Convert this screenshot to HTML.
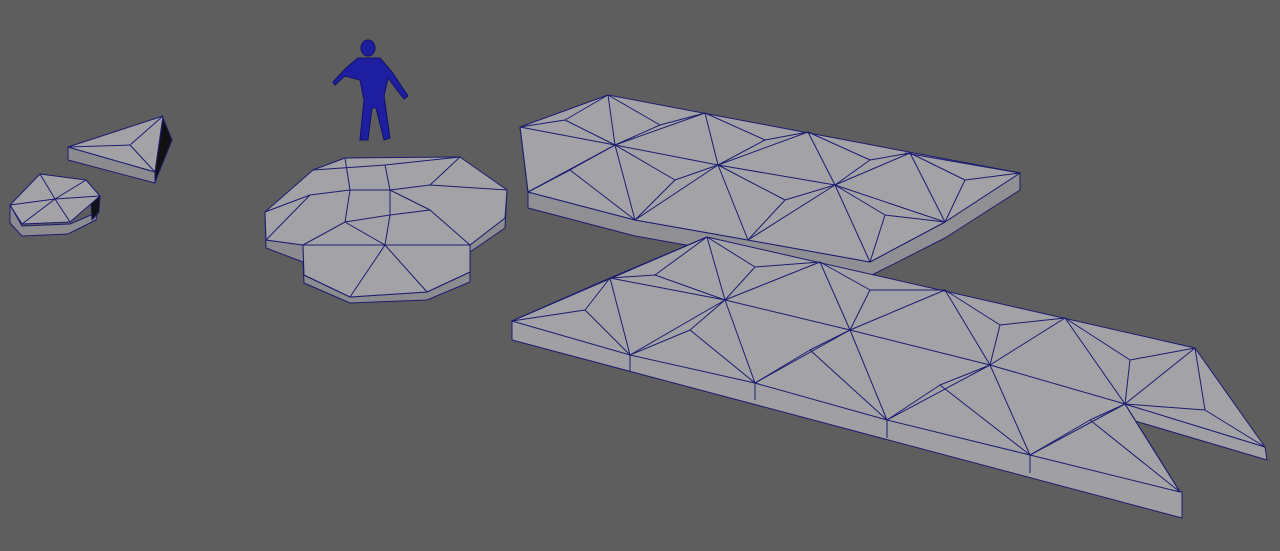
<!DOCTYPE html>
<html><head><meta charset="utf-8"><style>html,body{margin:0;padding:0;background:#5e5e5e;overflow:hidden}svg{display:block}</style></head>
<body>
<svg width="1280" height="551" viewBox="0 0 1280 551" xmlns="http://www.w3.org/2000/svg">
<rect width="1280" height="551" fill="#5e5e5e"/>
<g stroke="#1c1c70" stroke-width="1" stroke-linejoin="round">
<!-- small hex -->
<polygon points="10,205 10,223 22,236 68,234 96,220 100,196 98,212 70,224 22,226" fill="#8c8c90"/>
<polygon points="90,188 100,196 99,212 92,220" fill="#111"/>
<polygon points="10,205 40,174 86,180 100,196 70,222 22,224" fill="#a3a3a7"/>
<path d="M55,199 L40,174 M55,199 L86,180 M55,199 L100,196 M55,199 L70,222 M55,199 L22,224 M55,199 L10,205" fill="none"/>
<!-- triangle -->
<polygon points="68,147 68,160 155,183 168,142 155,172" fill="#8c8c90"/>
<polygon points="163,118 172,140 155,182 155,170" fill="#111"/>
<polygon points="68,147 163,116 155,172" fill="#a3a3a7"/>
<path d="M130,145 L68,147 M130,145 L163,116 M130,145 L155,172" fill="none"/>
<!-- hex cluster -->
<polygon points="265,212 266,248 303,262 304,283 350,303 427,300 470,282 470,252 505,228 507,190 505,218 470,245 470,272 427,292 350,297 304,275 303,245 266,240" fill="#8c8c90"/>
<polygon points="265,212 313,170 345,158 460,157 507,190 505,218 470,245 470,272 427,292 350,297 304,275 303,245 266,240" fill="#a3a3a7"/>
<path d="M313,170 L385,165 L460,157 M345,158 L350,190 L310,195 L265,212 M385,165 L390,190 L350,190 M460,157 L430,185 L390,190 L430,210 L470,245 M430,185 L507,190 M350,190 L345,222 L303,245 M345,222 L390,215 L430,210 M390,215 L385,245 L345,222 M385,245 L427,292 M385,245 L350,297 M385,245 L470,245 M385,245 L303,245 M310,195 L266,240 M390,190 L390,215" fill="none"/>
<!-- top strip -->
<polygon points="528,192 528,208 635,236 748,256 870,276 945,238 1020,190 1020,173 945,222 870,262 748,240 635,220" fill="#909094"/>
<polygon points="520,127 608,95 1020,173 945,222 870,262 748,240 635,220 528,192" fill="#a3a3a7"/>
<path d="M520,127 L615,145 L718,165 L835,185 L945,222 M608,95 L615,145 L705,113 L718,165 L808,132 L835,185 L910,153 L945,222 M615,145 L635,220 L718,165 L748,240 L835,185 L870,262 M528,192 L615,145 M520,127 L528,192 M905,153 L1020,173" fill="none"/>
<path d="M565,120 L608,95 M565,120 L615,145 M565,120 L520,127 M570,170 L528,192 M570,170 L615,145 M570,170 L635,220 M660,125 L705,113 M660,125 L615,145 M660,125 L608,95 M675,180 L635,220 M675,180 L718,165 M675,180 L615,145 M765,140 L808,132 M765,140 L718,165 M765,140 L705,113 M785,200 L748,240 M785,200 L835,185 M785,200 L718,165 M870,160 L910,153 M870,160 L835,185 M870,160 L808,132 M885,215 L870,262 M885,215 L945,222 M885,215 L835,185 M965,180 L1020,173 M965,180 L945,222 M965,180 L910,153" fill="none"/>
<!-- big strip -->
<polygon points="512,321 512,340 1182,518 1182,492" fill="#a0a0a4"/>
<polygon points="1125,404 1265,447 1267,460 1125,418" fill="#a0a0a4"/>
<polygon points="512,321 707,237 1195,348 1265,447 1125,404 1180,492 1030,455 887,420 755,383 630,355" fill="#a3a3a7"/>
<path d="M610,278 L725,300 L850,330 L990,365 L1125,404 M512,321 L610,278 L630,355 L725,300 L755,383 L850,330 L887,420 L990,365 L1030,455 L1125,404 L1180,492 M610,278 L707,237 L725,300 L820,262 L850,330 L945,290 L990,365 L1065,318 L1125,404 L1195,348 M630,355 L630,372 M755,383 L755,400 M887,420 L887,438 M1030,455 L1030,473" fill="none"/>
<path d="M585,310 L512,321 M585,310 L610,278 M585,310 L630,355 M655,275 L610,278 M655,275 L707,237 M655,275 L725,300 M690,330 L630,355 M690,330 L725,300 M690,330 L755,383 M755,267 L707,237 M755,267 L820,262 M755,267 L725,300 M810,350 L755,383 M810,350 L850,330 M810,350 L887,420 M870,290 L820,262 M870,290 L945,290 M870,290 L850,330 M940,385 L887,420 M940,385 L990,365 M940,385 L1030,455 M1000,325 L945,290 M1000,325 L1065,318 M1000,325 L990,365 M1090,420 L1030,455 M1090,420 L1125,404 M1090,420 L1180,492 M1130,360 L1065,318 M1130,360 L1195,348 M1130,360 L1125,404 M1205,410 L1125,404 M1205,410 L1195,348 M1205,410 L1265,447" fill="none"/>
</g>
<!-- figure -->
<g fill="#1e1ea0" stroke="#10106a" stroke-width="1">
<ellipse cx="368" cy="48" rx="7" ry="8"/>
<path d="M358,58 L380,58 L392,72 L408,96 L404,99 L388,78 L384,96 L390,138 L384,140 L376,108 L372,108 L368,140 L360,140 L364,100 L360,80 L345,76 L335,85 L333,82 L346,68 Z"/>
</g>
</svg>
</body></html>
